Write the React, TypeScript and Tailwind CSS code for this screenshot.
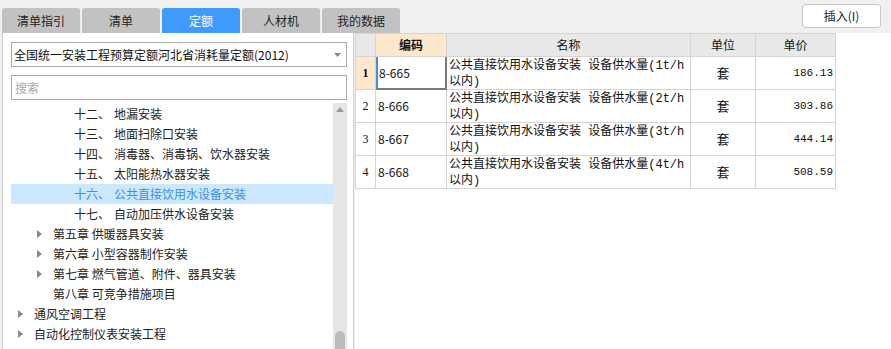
import type { ReactNode } from 'react';

const sans = { fontFamily: '"Noto Sans CJK SC", "Noto Sans", sans-serif' };
const mono = { fontFamily: '"Liberation Mono", "Noto Sans CJK SC", monospace' };

type TreeRow = {
  num?: string;
  label: string;
  level: 0 | 1 | 2;
  arrow?: boolean;
  active?: boolean;
};

const treeRows: TreeRow[] = [
  { num: '十二、', label: '地漏安装', level: 2 },
  { num: '十三、', label: '地面扫除口安装', level: 2 },
  { num: '十四、', label: '消毒器、消毒锅、饮水器安装', level: 2 },
  { num: '十五、', label: '太阳能热水器安装', level: 2 },
  { num: '十六、', label: '公共直接饮用水设备安装', level: 2, active: true },
  { num: '十七、', label: '自动加压供水设备安装', level: 2 },
  { label: '第五章 供暖器具安装', level: 1, arrow: true },
  { label: '第六章 小型容器制作安装', level: 1, arrow: true },
  { label: '第七章 燃气管道、附件、器具安装', level: 1, arrow: true },
  { label: '第八章 可竞争措施项目', level: 1 },
  { label: '通风空调工程', level: 0, arrow: true },
  { label: '自动化控制仪表安装工程', level: 0, arrow: true },
];

const tabs = ['清单指引', '清单', '定额', '人材机', '我的数据'];

const rows = [
  { code: '8-665', q: '1', price: '186.13' },
  { code: '8-666', q: '2', price: '303.86' },
  { code: '8-667', q: '3', price: '444.14' },
  { code: '8-668', q: '4', price: '508.59' },
];

function Arrow() {
  return (
    <svg width="5" height="8" viewBox="0 0 5 8" className="shrink-0">
      <path d="M0 0 L5 4 L0 8 Z" fill="#8a8a8a" />
    </svg>
  );
}

function Tree() {
  return (
    <div className="flex-1">
      {treeRows.map((r) => {
        const left = r.level === 2 ? 'pl-[63px]' : r.level === 1 ? 'pl-[26px]' : 'pl-[7px]';
        return (
          <div
            key={r.label}
            className={`flex h-[20px] items-center text-[12px] ${left} ${
              r.active ? 'bg-[#cce8ff] text-[#3d8fe8]' : 'text-[#222]'
            }`}
          >
            {r.level !== 2 ? (
              <span className="flex w-[16px] items-center">{r.arrow ? <Arrow /> : null}</span>
            ) : null}
            {r.num ? <span className="w-[40px]">{r.num}</span> : null}
            <span className="whitespace-nowrap">{r.label}</span>
          </div>
        );
      })}
    </div>
  );
}

function Cell({ children, className = '' }: { children?: ReactNode; className?: string }) {
  return <div className={`border-r border-b border-[#d4d4d4] ${className}`}>{children}</div>;
}

export default function App() {
  return (
    <div className="flex h-[349px] w-[891px] flex-col overflow-hidden bg-[#f0f0f0]" style={sans}>
      <div className="flex h-[33px] shrink-0 items-end justify-between">
        <div className="flex gap-[2px] pl-[2px]">
          {tabs.map((t) => (
            <div
              key={t}
              className={`flex h-[25px] w-[78px] items-center justify-center rounded-t-[3px] text-[12px] ${
                t === '定额' ? 'bg-[#409bff] text-white' : 'bg-[#c2c2c2] text-[#222]'
              }`}
            >
              {t}
            </div>
          ))}
        </div>
        <button
          type="button"
          className="mb-[5px] mr-[10px] flex h-[24px] w-[79px] items-center justify-center rounded-[3px] border border-[#c6c6c6] bg-white text-[12px] text-[#222]"
        >
          插入(I)
        </button>
      </div>

      <div className="flex min-h-0 flex-1">
        <div className="ml-[2px] flex w-[352px] shrink-0 flex-col border-x border-[#cfcfcf] bg-white pl-[8px] pr-[6px]">
          <div className="mt-[9px] flex h-[25px] items-center justify-between border border-[#aaaaaa] pl-[2px] pr-[5px] text-[12px] text-[#111]">
            <span>全国统一安装工程预算定额河北省消耗量定额(2012)</span>
            <svg width="7" height="4" viewBox="0 0 7 4">
              <path d="M0 0 L7 0 L3.5 4 Z" fill="#8a8a8a" />
            </svg>
          </div>
          <div className="mt-[8px] flex h-[25px] items-center border border-[#aaaaaa] pl-[3px] text-[12px] text-[#a8a8a8]">
            搜索
          </div>
          <div className="mt-[3px] flex min-h-0 flex-1">
            <div className="mt-[1px] flex-1">
              <Tree />
            </div>
            <div className="flex w-[14px] flex-col items-center justify-between bg-[#e6e6e6]">
              <svg width="8" height="5" viewBox="0 0 8 5" className="mt-[4px]">
                <path d="M0 5 L8 5 L4 0 Z" fill="#9a9a9a" />
              </svg>
              <div className="h-[18px] w-[10px] rounded-t-[5px] bg-[#bcbcbc]" />
            </div>
          </div>
        </div>

        <div className="ml-[1px] flex-1 bg-white">
          <div className="w-[481px] border-l border-t border-[#d4d4d4] text-[12px] text-[#111]">
            <div className="flex h-[23px] bg-[#e8e8e8]">
              <Cell className="w-[20px]" />
              <Cell className="flex w-[71px] items-center justify-center bg-[#fde8cc] font-bold">编码</Cell>
              <Cell className="flex w-[244px] items-center justify-center">名称</Cell>
              <Cell className="flex w-[65px] items-center justify-center">单位</Cell>
              <Cell className="flex w-[80px] items-center justify-center">单价</Cell>
            </div>
            {rows.map((r, i) => (
              <div key={r.code} className="flex h-[33px]">
                <Cell
                  className={`flex w-[20px] items-center justify-center ${
                    i === 0 ? 'bg-[#fde8cc] font-bold' : ''
                  }`}
                >
                  <span style={{ fontFamily: '"Liberation Serif", serif' }}>{i + 1}</span>
                </Cell>
                {i === 0 ? (
                  <div className="flex w-[71px] items-center border-b-2 border-l-2 border-r-2 border-b-[#7a7a7a] border-l-[#3d8fe8] border-r-[#7a7a7a] pl-[1px]">
                    {r.code}
                  </div>
                ) : (
                  <Cell className="flex w-[71px] items-center pl-[2px]">{r.code}</Cell>
                )}
                <Cell className="flex w-[244px] flex-col justify-center pl-[2px] leading-[13px]">
                  <span className="whitespace-nowrap" style={mono}>
                    <span style={sans}>公共直接饮用水设备安装</span> <span style={sans}>设备供水量</span>({r.q}t/h
                  </span>
                  <span style={mono}>
                    <span style={sans}>以内</span>)
                  </span>
                </Cell>
                <Cell className="flex w-[65px] items-center justify-center text-[13px]">套</Cell>
                <Cell className="flex w-[80px] items-center justify-end pr-[2px]">
                  <span style={mono} className="text-[11px]">
                    {r.price}
                  </span>
                </Cell>
              </div>
            ))}
          </div>
        </div>
      </div>
    </div>
  );
}
